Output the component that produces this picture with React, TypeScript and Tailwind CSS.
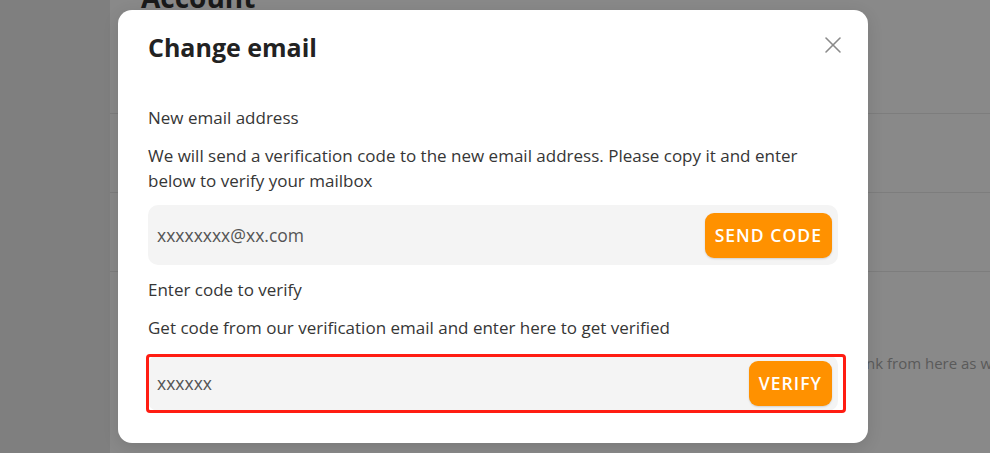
import { X } from 'lucide-react'

function CodeInput({ value, action }: { value: string; action: string }) {
  return (
    <div className="flex items-center justify-between pl-[9px] pr-[6px]">
      <span className="text-[17.5px] text-[#555]">{value}</span>
      <button className="h-[45px] px-[10px] rounded-[9px] bg-[#ff9100] text-white text-[17.5px] font-semibold tracking-[0.06em] shadow-[0_1px_2px_rgba(0,0,0,0.15)]">
        {action}
      </button>
    </div>
  )
}

function App() {
  return (
    <div className="relative w-[990px] h-[453px] overflow-hidden flex font-['Open_Sans',sans-serif]">
      {/* page behind the dialog, dimmed */}
      <div className="w-[110px] shrink-0 bg-[#7f7f7f]" />
      <div className="flex-1 min-w-0 bg-[#898989] overflow-hidden">
        <div className="h-[114px] flex flex-col border-b border-[#7d7d7d] pl-[31px]">
          <h1 className="-mt-[24px] text-[28px] font-bold text-[#1a1a1a]">Account</h1>
        </div>
        <div className="h-[79px] border-b border-[#7d7d7d]" />
        <div className="h-[79px] border-b border-[#7d7d7d]" />
        <p className="pt-[79px] pl-[756px] whitespace-nowrap text-[15px] leading-[25px] text-[#5a5a5a]">nk from here as well</p>
      </div>

      {/* dialog */}
      <div className="absolute left-[118px] top-[10px] w-[750px] h-[433px] bg-white rounded-[14px] shadow-[0_4px_16px_rgba(0,0,0,0.12)] px-[30px] pt-[21px] text-[#363636]">
        <div className="flex items-center justify-between">
          <h2 className="text-[25px] leading-[32px] font-bold text-[#222]">Change email</h2>
          <button className="relative -top-[2px] mr-[-9px] text-[#8a8a8a]">
            <X size={28} strokeWidth={1.3} />
          </button>
        </div>

        <p className="mt-[42px] text-[17px] leading-[25px]">New email address</p>
        <p className="mt-[13px] text-[17px] leading-[25px]">
          We will send a verification code to the new email address. Please copy it and enter below to verify your mailbox
        </p>
        <div className="mt-[12px] h-[60px] flex flex-col justify-center bg-[#f4f4f4] rounded-[10px]">
          <CodeInput value="xxxxxxxx@xx.com" action="SEND CODE" />
        </div>

        <p className="mt-[12px] text-[17px] leading-[25px]">Enter code to verify</p>
        <p className="mt-[13px] text-[17px] leading-[25px]">Get code from our verification email and enter here to get verified</p>
        <div className="relative mt-[15px] h-[56px] flex flex-col justify-center bg-[#f4f4f4] rounded-[10px]">
          <CodeInput value="xxxxxx" action="VERIFY" />
          <div className="absolute -left-[2px] -top-[1px] -right-[8px] -bottom-[2px] border-[3.5px] border-[#ff1c12] rounded-[4px]" />
        </div>
      </div>
    </div>
  )
}

export default App
